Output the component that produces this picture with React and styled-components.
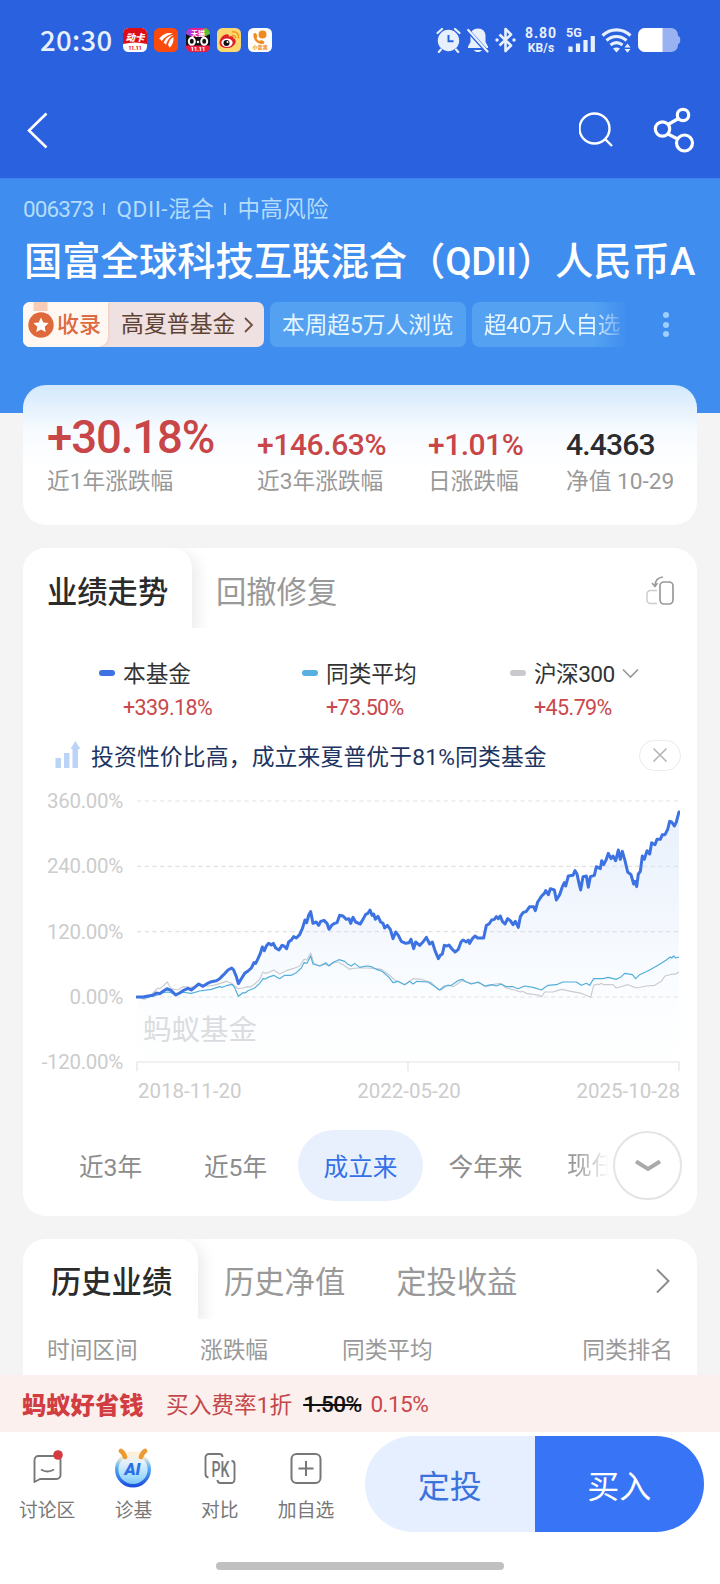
import React from 'react';
import styled, { createGlobalStyle } from 'styled-components';

const GlobalStyle = createGlobalStyle`
  * {
    box-sizing: border-box;
  }
  body {
    margin: 0;
    background: #f4f4f4;
    font-family: Roboto, 'Noto Sans CJK SC', sans-serif;
    -webkit-font-smoothing: antialiased;
  }
`;

// chart points, x 0-1626, y 0 (360%) - 783 (-120%)
const fundLine =
  '0,588 18,588 33,585 48,583 58,576 68,578 78,571 90,563 103,569 116,582 128,576 138,569 153,562 163,567 173,559 185,549 198,556 210,548 223,542 238,539 248,533 260,521 273,507 284,501 290,507 298,527 304,548 313,533 323,517 333,510 343,501 351,485 356,487 363,473 370,457 376,438 382,449 388,435 395,427 403,432 409,427 416,441 426,447 435,433 441,435 449,443 455,423 463,417 470,407 478,411 488,401 496,383 504,357 509,365 515,343 521,332 528,367 538,363 545,373 551,361 561,358 570,367 576,385 584,373 593,367 600,365 608,343 618,345 628,355 636,353 641,367 648,349 656,363 670,369 678,355 686,340 693,337 699,327 705,343 710,339 715,355 723,346 731,363 738,367 743,381 751,373 760,385 768,413 776,393 784,403 793,421 806,427 816,425 822,415 830,443 836,423 848,433 858,423 868,409 878,429 886,423 894,449 904,473 910,463 916,459 922,433 930,435 936,432 944,443 954,453 964,445 972,423 978,417 988,423 994,417 998,427 1006,413 1014,405 1022,411 1040,411 1048,373 1056,369 1064,357 1072,355 1078,347 1084,353 1090,345 1096,361 1104,369 1112,353 1120,359 1128,371 1135,361 1144,379 1150,347 1158,335 1168,331 1178,317 1190,317 1195,329 1202,303 1214,285 1222,277 1226,269 1234,281 1240,263 1252,267 1258,297 1268,281 1276,257 1282,245 1286,255 1294,225 1308,223 1314,209 1320,219 1326,247 1331,267 1338,227 1348,225 1354,259 1360,227 1372,223 1378,197 1390,203 1394,179 1400,191 1408,175 1414,157 1422,173 1428,165 1436,179 1444,147 1450,175 1456,151 1464,179 1472,213 1482,221 1490,249 1494,241 1499,257 1504,219 1510,211 1516,165 1522,175 1530,149 1538,159 1544,125 1554,131 1560,115 1570,115 1576,101 1584,101 1592,85 1598,61 1604,63 1612,75 1618,63 1626,33';
const peerLine =
  '0,588 23,591 48,585 62,582 78,575 93,573 113,579 133,573 163,577 188,570 223,565 248,557 256,559 268,554 286,550 293,560 304,586 318,575 324,576 333,569 353,561 368,547 378,533 386,534 393,529 410,523 420,529 428,533 443,523 463,523 478,515 493,501 501,485 510,487 521,465 528,489 548,495 558,491 566,485 576,495 590,483 606,476 623,481 630,488 643,495 653,487 668,499 688,495 703,497 718,505 728,508 738,513 756,529 768,545 783,541 803,551 818,541 828,549 840,541 873,543 888,553 908,567 923,555 943,553 963,539 976,535 988,543 1003,549 1023,543 1043,555 1063,551 1078,555 1093,549 1108,557 1128,557 1143,563 1163,555 1188,559 1213,567 1233,553 1258,551 1278,543 1318,543 1333,553 1348,547 1358,553 1370,533 1398,533 1413,529 1438,535 1453,527 1463,517 1486,521 1496,533 1508,521 1538,507 1563,493 1588,477 1600,468 1604,471 1610,465 1616,471 1626,468';
const indexLine =
  '0,588 23,595 36,589 48,575 63,561 68,563 76,557 91,543 96,553 103,563 123,567 138,557 163,559 188,551 213,555 230,553 240,550 268,541 283,547 293,555 304,563 318,561 333,557 340,558 353,549 368,535 378,513 384,517 393,515 410,507 428,519 448,509 468,503 488,495 501,475 510,477 521,456 530,485 548,495 556,489 566,491 576,494 583,487 603,483 618,491 638,505 644,503 663,501 688,501 718,503 733,505 753,519 773,537 803,551 815,543 829,533 853,535 883,545 903,565 913,567 933,551 948,557 976,539 988,543 1003,547 1028,545 1048,557 1068,551 1088,547 1108,561 1133,567 1150,573 1156,571 1168,577 1208,583 1213,588 1223,573 1248,573 1273,565 1303,571 1333,577 1350,584 1361,589 1370,553 1382,549 1386,551 1393,547 1400,551 1428,551 1438,561 1473,551 1498,561 1528,555 1553,553 1573,541 1584,525 1608,519 1614,520 1626,513';

const ranges = ['近3年', '近5年', '成立来', '今年来'];
const yTicks = ['360.00%', '240.00%', '120.00%', '0.00%', '-120.00%'];

const StatusIcons = () => (
  <StatusRight>
    <svg width="25" height="26" viewBox="0 0 25 26">
      <circle cx="12.5" cy="13.5" r="10.7" fill="#e8f0fd" />
      <path d="M1.5 6 6 2M23.5 6 19 2M5 22.5 2.8 25M20 22.5l2.2 2.5" stroke="#e8f0fd" strokeWidth="2.2" strokeLinecap="round" />
      <path d="M12.5 8v6.3h5" fill="none" stroke="#2a61df" strokeWidth="2" />
    </svg>
    <svg width="22" height="26" viewBox="0 0 22 26">
      <path d="M11 1.5c-4.6 0-7.5 3-7.5 7.5v6L1 19.5V21h20v-1.5L18.5 15V9c0-4.5-2.9-7.5-7.5-7.5z" fill="#e8f0fd" />
      <path d="M7 23h8c-1.5 2.7-6.5 2.7-8 0z" fill="#e8f0fd" />
      <path d="M0 2.5 20.5 25" stroke="#2a61df" strokeWidth="4" />
      <path d="M1.2 3 20.5 24.5" stroke="#e8f0fd" strokeWidth="2.2" strokeLinecap="round" />
    </svg>
    <svg width="21" height="26" viewBox="0 0 21 26">
      <path d="M4.5 7.5 16 18.500 10.500 24V2L16 7.500 4.500 18.500" fill="none" stroke="#e8f0fd" strokeWidth="2.6" strokeLinejoin="round" />
      <circle cx="2" cy="13" r="1.7" fill="#e8f0fd" />
      <circle cx="19" cy="13" r="1.7" fill="#e8f0fd" />
    </svg>
    <Speed>
      <span>8.80</span>
      <small>KB/s</small>
    </Speed>
    <Signal>
      <span>5G</span>
      <svg width="28" height="26" viewBox="0 0 28 26">
        <path d="M3.5 25v-5.500M11 25v-8.500M18.500 25V13M25.800 25V9" stroke="#e8f0fd" strokeWidth="4.2" />
      </svg>
    </Signal>
    <svg width="31" height="26" viewBox="0 0 31 26">
      <g fill="none" stroke="#e8f0fd" strokeWidth="3.1">
        <path d="M1.5 8.500C9.500 1 21.500 1 29.500 8.500" />
        <path d="M5.5 13.500c6-5.300 14-5.300 20 0" />
        <path d="M9.5 18c4-3.200 8-3.200 12 0" />
      </g>
      <path d="M12 21.500c2.300-1.500 4.700-1.500 7 0l-3.500 4z" fill="#e8f0fd" />
      <path d="M23.500 20.500 26.500 16.500 29.500 20.500zM23.500 22h6l-3 3.800z" fill="#e8f0fd" />
    </svg>
    <svg width="43" height="26" viewBox="0 0 43 26">
      <rect x="0" y="1" width="40" height="24" rx="7" fill="#98b3ef" />
      <path d="M7 1H24.500V25H7a7 7 0 0 1-7-7V8a7 7 0 0 1 7-7z" fill="#fff" />
      <path d="M40 9c3 0 3 8 0 8z" fill="#98b3ef" />
    </svg>
  </StatusRight>
);

const AppIcons = () => (
  <AppRow>
    <svg width="24" height="24" viewBox="0 0 24 24">
      <rect width="24" height="24" rx="5.5" fill="#fff" />
      <path d="M0 16V5.500A5.500 5.500 0 0 1 5.500 0h13A5.500 5.500 0 0 1 24 5.500V16q-12-3-24 0z" fill="#dd0d18" />
      <text x="12" y="12.500" fontSize="9.5" fontWeight="900" fontStyle="italic" textAnchor="middle" fill="#fff">动卡</text>
      <text x="12" y="22" fontSize="5" fontWeight="900" textAnchor="middle" fill="#dd0d18">11.11</text>
    </svg>
    <svg width="24" height="24" viewBox="0 0 24 24">
      <rect width="24" height="24" rx="5.5" fill="#fa4a0c" />
      <path d="M5 11C9 5 15 4 19 5.500 13 7 9 11 7.500 13.500 7.500 12 6.500 11 5 11z" fill="#fff" />
      <path d="M9.500 15C11 10.500 15 7.500 19.500 7 15 9.500 13 13 12 17c-.5-1.200-1.300-1.900-2.500-2z" fill="#fff" />
      <path d="M14 17.500c.5-3.500 2-7 5.500-8.500.5 4-1 8-4 11 .2-1-.4-2-1.500-2.500z" fill="#fff" />
    </svg>
    <svg width="24" height="24" viewBox="0 0 24 24">
      <rect width="24" height="24" rx="5.5" fill="#ed1c43" />
      <path d="M3 1.500Q4 .5 7 0H17q4 0 5 2l2 6H0V5z" fill="#e8209a" />
      <path d="M0 9V5Q1 1.500 4 .5L8 5l-5 5z" fill="#a13ee8" />
      <path d="M24 8V5q-1-4-5-5l-3 3 4 6z" fill="#5abf36" />
      <text x="12" y="7.500" fontSize="7" fontWeight="700" textAnchor="middle" fill="#fff">天猫</text>
      <path d="M0 6l6 3h12l6-3v11.500H0z" fill="#111" />
      <g fill="#111" stroke="#fff" strokeWidth="2">
        <ellipse cx="5.800" cy="13.300" rx="3" ry="3.500" />
        <ellipse cx="18.200" cy="13.300" rx="3" ry="3.500" />
      </g>
      <circle cx="12" cy="14" r="1.2" fill="#fff" />
      <text x="12" y="23" fontSize="5.5" fontWeight="900" textAnchor="middle" fill="#fff">11.11</text>
    </svg>
    <svg width="24" height="24" viewBox="0 0 24 24">
      <rect width="24" height="24" rx="5.5" fill="#fbd76f" />
      <path d="M2.500 15c0-5 5-9.500 8.500-8.500 1 .3 1 1.500.8 2.300 3-1 5-.5 4.700 1.700 2 .6 2.700 2 2 4C17.500 18 14 20 10 20s-7.500-2-7.500-5z" fill="#e01f26" />
      <ellipse cx="10" cy="14.800" rx="5.600" ry="4.200" fill="#fff" />
      <circle cx="9.500" cy="15" r="3" fill="#111" />
      <circle cx="10.500" cy="14" r="1" fill="#fff" />
      <path d="M15 7.500c2.500-.5 4 1 3.500 3M15 4c4.500-1 7.500 2.500 6.500 6.500" fill="none" stroke="#f3981d" strokeWidth="1.500" />
    </svg>
    <svg width="24" height="24" viewBox="0 0 24 24">
      <rect width="24" height="24" rx="5.5" fill="#fdfdfd" />
      <circle cx="14.500" cy="6.500" r="4" fill="#f08a1e" />
      <path d="M5.500 5.500 8 5l1.500 3.500L8.500 10c.5 1.500 1.700 2.500 3.200 3l1.500-1 3 1.500v2c-6 2-11.500-3-10.700-10z" fill="#f08a1e" />
      <text x="12" y="21" fontSize="5" fontWeight="700" textAnchor="middle" fill="#f08a1e">小黄滴</text>
    </svg>
  </AppRow>
);

const PerformanceChart = () => (
  <ChartBox>
    <YAxis>
      {yTicks.map((t) => (
        <span key={t}>{t}</span>
      ))}
    </YAxis>
    <Plot>
      <svg width="544" height="277" viewBox="-3 -3 1632 831">
        <defs>
          <linearGradient id="area" x1="0" y1="0" x2="0" y2="783" gradientUnits="userSpaceOnUse">
            <stop offset="0" stopColor="#3b80e8" stopOpacity="0.12" />
            <stop offset="0.5" stopColor="#3b80e8" stopOpacity="0.055" />
            <stop offset="0.75" stopColor="#3b9bf0" stopOpacity="0.02" />
            <stop offset="1" stopColor="#3b9bf0" stopOpacity="0.003" />
          </linearGradient>
        </defs>
        <polygon points={`${fundLine} 1626,783 0,783`} fill="url(#area)" />
        {[0, 196, 392, 588].map((y) => (
          <path key={y} d={`M0 ${y}H1626`} stroke="#dfe1e5" strokeWidth="3.5" strokeDasharray="13 10" />
        ))}
        <path d="M0 811V783H1626V811M813 783V811" fill="none" stroke="#e3e3e5" strokeWidth="3.5" />
        <g fill="none" strokeLinejoin="round">
          <polyline points={indexLine} stroke="#c9cbd0" strokeWidth="3.5" />
          <polyline points={peerLine} stroke="#52aedb" strokeWidth="3.5" />
          <polyline points={fundLine} stroke="#3c72e2" strokeWidth="9" strokeLinecap="round" />
        </g>
      </svg>
      <Watermark>蚂蚁基金</Watermark>
      <XAxis>
        <span>2018-11-20</span>
        <span>2022-05-20</span>
        <span>2025-10-28</span>
      </XAxis>
    </Plot>
  </ChartBox>
);

const App = () => {
  return (
    <Page>
      <GlobalStyle />
      <TopBar>
        <StatusBar>
          <StatusLeft>
            <Clock>20:30</Clock>
            <AppIcons />
          </StatusLeft>
          <StatusIcons />
        </StatusBar>
        <NavBar>
          <svg width="24" height="38" viewBox="0 0 24 38">
            <path d="M20.500 2.500 3 19.500 20.500 36.500" fill="none" stroke="#fff" strokeWidth="2.6" />
          </svg>
          <NavActions>
            <svg width="36" height="44" viewBox="0 0 36 44">
              <circle cx="15.500" cy="20.500" r="15" fill="none" stroke="#fff" strokeWidth="2.4" />
              <path d="M26 31 33 38" stroke="#fff" strokeWidth="2.4" />
            </svg>
            <svg width="42" height="46" viewBox="0 0 42 46">
              <g fill="none" stroke="#fff" strokeWidth="3.2">
                <circle cx="9.500" cy="22" r="7.200" />
                <circle cx="30" cy="8" r="5.700" />
                <circle cx="31.500" cy="36" r="8" />
                <path d="M15 17.500 25.500 11.500M15 27 24.500 32" />
              </g>
            </svg>
          </NavActions>
        </NavBar>
      </TopBar>

      <Hero>
        <Meta>
          <MetaItem $spacing="-0.9px">006373</MetaItem>
          <i />
          <MetaItem $spacing="0.6px">QDII-混合</MetaItem>
          <i />
          <MetaItem $spacing="0.4px">中高风险</MetaItem>
        </Meta>
        <FundName>
          国富全球科技互联混合（<em>QDII</em>）人民币A
        </FundName>
        <TagRow>
          <AwardTag>
            <AwardBadge>
              <svg width="27" height="45" viewBox="0 0 27 45">
                <path d="M5.500 0h14v9h-14z" fill="#f8cdb6" />
                <circle cx="13" cy="23" r="12.700" fill="#e0693b" />
                <path d="m13 15.500 2.300 4.900 5.300.7-3.900 3.700 1 5.300-4.700-2.600-4.700 2.600 1-5.300-3.900-3.700 5.300-.7z" fill="#fff" />
              </svg>
              <span>收录</span>
            </AwardBadge>
            <AwardText>
              高夏普基金
              <svg width="10" height="18" viewBox="0 0 10 18">
                <path d="m1 2 7 7-7 7" fill="none" stroke="#6d5040" strokeWidth="1.800" />
              </svg>
            </AwardText>
          </AwardTag>
          <Tag $width="196px">本周超5万人浏览</Tag>
          <Tag $width="160px" $faded>超40万人自选</Tag>
          <MoreDots>
            <i />
            <i />
            <i />
          </MoreDots>
        </TagRow>
      </Hero>

      <StatsCard>
        <Stat $width="210px">
          <StatValue $size="45.5px" $spacing="-1.1px">+30.18%</StatValue>
          <StatLabel>近1年涨跌幅</StatLabel>
        </Stat>
        <Stat $width="171px">
          <StatValue $spacing="-0.4px">+146.63%</StatValue>
          <StatLabel>近3年涨跌幅</StatLabel>
        </Stat>
        <Stat $width="138px">
          <StatValue $spacing="-0.5px">+1.01%</StatValue>
          <StatLabel>日涨跌幅</StatLabel>
        </Stat>
        <Stat>
          <StatValue $dark $spacing="-0.8px">4.4363</StatValue>
          <StatLabel>净值 10-29</StatLabel>
        </Stat>
      </StatsCard>

      <TrendCard>
        <Tabs>
          <ActiveTab $width="169px">业绩走势</ActiveTab>
          <Tab $left="24px">回撤修复</Tab>
          <TabAction $right="22px">
            <svg width="30" height="32" viewBox="0 0 30 32">
              <rect x="15" y="9" width="13" height="22" rx="4" fill="none" stroke="#999" strokeWidth="1.700" />
              <path d="M12 17.500H5.500a3.500 3.500 0 0 0-3.500 3.500v6A3.500 3.500 0 0 0 5.500 30.500h6.500" fill="none" stroke="#ccc" strokeWidth="1.500" />
              <path d="M18 4C12.500 4.500 10 8 10 13M7 10l3 3.500 2.500-3.500" fill="none" stroke="#999" strokeWidth="1.500" />
            </svg>
          </TabAction>
        </Tabs>
        <Legend>
          <LegendItem $left="76px">
            <Dash $color="#3c72e2" />
            <div>
              <LegendName>本基金</LegendName>
              <LegendValue>+339.18%</LegendValue>
            </div>
          </LegendItem>
          <LegendItem $left="279px">
            <Dash $color="#58b0e2" />
            <div>
              <LegendName>同类平均</LegendName>
              <LegendValue>+73.50%</LegendValue>
            </div>
          </LegendItem>
          <LegendItem $left="487px">
            <Dash $color="#c9cacd" />
            <div>
              <LegendName>
                <LegendIndex>沪深300</LegendIndex>
                <svg width="17" height="11" viewBox="0 0 17 11">
                  <path d="m1 1.500 7.500 7.500L16 1.500" fill="none" stroke="#999" strokeWidth="1.700" />
                </svg>
              </LegendName>
              <LegendValue>+45.79%</LegendValue>
            </div>
          </LegendItem>
        </Legend>
        <Tip>
          <svg width="26" height="28" viewBox="0 0 26 28">
            <path d="M.5 17h5.500v10H.5zM9 12h5.500v15H9zM17.500 7H23v20h-5.500z" fill="#bcd3f8" />
            <path d="M15.500 8 20.300 0l5.200 8z" fill="#bcd3f8" />
          </svg>
          <TipText>投资性价比高，成立来夏普优于81%同类基金</TipText>
          <CloseButton>
            <svg width="16" height="16" viewBox="0 0 16 16">
              <path d="m1.500 1.500 13 13M14.500 1.500l-13 13" stroke="#b5b5b5" strokeWidth="1.600" />
            </svg>
          </CloseButton>
        </Tip>
        <PerformanceChart />
        <RangeRow>
          {ranges.map((r) => (
            <Range key={r} $active={r === '成立来'}>
              {r}
            </Range>
          ))}
          <FadedRange>现任</FadedRange>
          <ExpandButton>
            <svg width="26" height="14" viewBox="0 0 26 14">
              <path d="M1 2.500 13 10 25 2.500" fill="none" stroke="#aaa" strokeWidth="4" />
            </svg>
          </ExpandButton>
        </RangeRow>
      </TrendCard>

      <HistoryCard>
        <Tabs $line="88px">
          <ActiveTab $width="175px" $pad="28px">历史业绩</ActiveTab>
          <Tab $left="26px">历史净值</Tab>
          <Tab $left="51px">定投收益</Tab>
          <TabAction $right="26px">
            <svg width="16" height="26" viewBox="0 0 16 26">
              <path d="M2 2.500 13.500 14 2 25.500" fill="none" stroke="#8c8c8c" strokeWidth="2" />
            </svg>
          </TabAction>
        </Tabs>
        <TableHead>
          <span>时间区间</span>
          <span>涨跌幅</span>
          <span>同类平均</span>
          <span>同类排名</span>
        </TableHead>
      </HistoryCard>

      <PromoBar>
        <PromoLogo>蚂蚁好省钱</PromoLogo>
        <PromoText>买入费率1折</PromoText>
        <OldRate>1.50%</OldRate>
        <NewRate>0.15%</NewRate>
      </PromoBar>

      <BottomBar>
        <Actions>
          <Action>
            <svg width="40" height="40" viewBox="0 0 40 40">
              <path d="M7.500 34V12A4 4 0 0 1 11.500 8H29.500A4 4 0 0 1 33.500 12V27A4 4 0 0 1 29.500 31H13z" fill="none" stroke="#777" strokeWidth="1.900" strokeLinejoin="round" />
              <path d="M14 21.500q6.500 4 13 0" fill="none" stroke="#777" strokeWidth="1.900" />
              <circle cx="31" cy="7" r="4.800" fill="#d43b40" />
            </svg>
            讨论区
          </Action>
          <Action>
            <svg width="40" height="40" viewBox="0 0 40 40">
              <defs>
                <linearGradient id="ball" x1="0" y1="0" x2="0" y2="1">
                  <stop offset="0" stopColor="#fdf1d8" />
                  <stop offset="0.3" stopColor="#e3f0fb" />
                  <stop offset="0.7" stopColor="#a5dcfb" />
                  <stop offset="1" stopColor="#6fc0fa" />
                </linearGradient>
                <linearGradient id="ring" x1="0" y1="0" x2="0" y2="1">
                  <stop offset="0.1" stopColor="#fdf0d6" />
                  <stop offset="0.45" stopColor="#54aef5" />
                  <stop offset="1" stopColor="#1c50e0" />
                </linearGradient>
              </defs>
              <circle cx="20" cy="21.500" r="16.300" fill="url(#ball)" stroke="url(#ring)" strokeWidth="3.400" />
              <path d="M8 3q2.500 1.500 4 6M32 3q-2.500 1.500-4 6" fill="none" stroke="#ee9a33" strokeWidth="4.600" strokeLinecap="round" />
              <text x="19.500" y="27" fontSize="17" fontWeight="900" fontStyle="italic" textAnchor="middle" fill="#2b6fe6">AI</text>
            </svg>
            诊基
          </Action>
          <Action>
            <svg width="40" height="40" viewBox="0 0 40 40">
              <path d="M8.500 29.500A3.500 3.500 0 0 1 5.500 26V9.500A3.500 3.500 0 0 1 9 6H19.500A3 3 0 0 1 22.500 9" fill="none" stroke="#777" strokeWidth="1.900" />
              <path d="M31.500 13A3 3 0 0 1 34.500 16V31.500A3.500 3.500 0 0 1 31 35H20.500A3 3 0 0 1 17.500 32" fill="none" stroke="#777" strokeWidth="1.900" />
              <text x="20.500" y="28.500" fontSize="22" fontWeight="500" textLength="18" lengthAdjust="spacingAndGlyphs" textAnchor="middle" fill="#777">PK</text>
            </svg>
            对比
          </Action>
          <Action>
            <svg width="40" height="40" viewBox="0 0 40 40">
              <rect x="5.500" y="6" width="29" height="29" rx="5" fill="none" stroke="#777" strokeWidth="2" />
              <path d="M20 13v15M12.500 20.500h15" stroke="#777" strokeWidth="2" />
            </svg>
            加自选
          </Action>
        </Actions>
        <Buttons>
          <PlanButton>定投</PlanButton>
          <BuyButton>买入</BuyButton>
        </Buttons>
        <HomeIndicator />
      </BottomBar>
    </Page>
  );
};

const Page = styled.div`
  display: flex;
  flex-direction: column;
  width: 720px;
  height: 1584px;
  overflow: hidden;
  background: #f4f4f4;
`;

const TopBar = styled.header`
  flex: none;
  height: 178px;
  background: #2a61df;
`;

const StatusBar = styled.div`
  display: flex;
  justify-content: space-between;
  align-items: center;
  height: 80px;
  padding: 0 40px;
`;

const StatusLeft = styled.div`
  display: flex;
  align-items: center;
`;

const Clock = styled.span`
  width: 83px;
  margin-top: -3px;
  color: #e8f0fd;
  font-family: 'Noto Sans CJK SC', sans-serif;
  font-size: 27.5px;
  font-weight: 500;
  line-height: 40px;
  letter-spacing: 0.3px;
`;

const AppRow = styled.div`
  display: flex;
  gap: 7.3px;
`;

const StatusRight = styled.div`
  display: flex;
  align-items: center;
  gap: 6px;
  margin-right: -1px;
`;

const Speed = styled.div`
  display: flex;
  flex-direction: column;
  align-items: center;
  width: 34px;
  margin: 0 3px 0 2px;
  color: #e8f0fd;
  font-weight: 700;
  line-height: 15px;
  font-size: 14px;
  letter-spacing: 0.9px;

  small {
    font-size: 12px;
    letter-spacing: 0.2px;
    line-height: 14px;
  }
`;

const Signal = styled.div`
  position: relative;
  height: 26px;

  span {
    position: absolute;
    left: -1px;
    top: -1px;
    color: #e8f0fd;
    font-size: 12.5px;
    font-weight: 700;
    line-height: 14px;
  }
`;

const NavBar = styled.div`
  display: flex;
  justify-content: space-between;
  align-items: center;
  height: 99px;
  padding: 1px 25px 0 26px;
`;

const NavActions = styled.div`
  display: flex;
  align-items: center;
  gap: 38px;
`;

const Hero = styled.section`
  flex: none;
  height: 235px;
  padding: 16px 23px 0;
  background: #3f8def;
  border-top: 1px solid #3c83ec;
`;

const Meta = styled.div`
  display: flex;
  align-items: center;
  height: 28px;
  color: #b4dcfc;
  font-size: 22.5px;
  line-height: 28px;

  i {
    width: 2px;
    height: 12px;
    margin: 0 11px 0 10px;
    background: #a6d2fa;
  }
`;

const MetaItem = styled.span`
  letter-spacing: ${(p) => p.$spacing};
`;

const FundName = styled.h1`
  height: 46px;
  margin: 16px 0 0 1px;
  color: #fff;
  font-size: 38.3px;
  font-weight: 500;
  line-height: 46px;
  white-space: nowrap;

  em {
    font-style: normal;
    letter-spacing: -0.4px;
  }
`;

const TagRow = styled.div`
  display: flex;
  gap: 6px;
  margin-top: 17px;
`;

const AwardTag = styled.div`
  display: flex;
  width: 241px;
  height: 45px;
  border-radius: 7px;
  background: #efe1e1;
  overflow: hidden;
`;

const AwardBadge = styled.div`
  display: flex;
  align-items: center;
  gap: 2px;
  width: 85px;
  padding-left: 5px;
  background: #fff8f2;
  border-bottom-right-radius: 10px;
  box-shadow: 1px 1px 2px #f0cfc2;
  color: #dd6a40;
  font-size: 22px;
  font-weight: 500;
  line-height: 45px;
  white-space: nowrap;

  span {
    height: 45px;
  }
`;

const AwardText = styled.div`
  display: flex;
  align-items: center;
  gap: 9px;
  padding-left: 13px;
  color: #5e4334;
  font-size: 22.9px;
  line-height: 46px;
  white-space: nowrap;
`;

const Tag = styled.div`
  width: ${(p) => p.$width};
  height: 45px;
  padding-left: 12px;
  border-radius: 7px;
  background: #54a1f1;
  color: #e6f6ff;
  font-size: 22.7px;
  line-height: 47px;
  white-space: nowrap;
  overflow: hidden;
  ${(p) =>
    p.$faded &&
    `
    letter-spacing: -0.4px;
    mask-image: linear-gradient(to right, #000 76%, transparent 98%);
  `}
`;

const MoreDots = styled.div`
  display: flex;
  flex-direction: column;
  justify-content: center;
  gap: 3.5px;
  margin-left: 25px;

  i {
    width: 6px;
    height: 6px;
    border-radius: 50%;
    background: #9ed0fb;
  }
`;

const Card = styled.section`
  flex: none;
  width: 674px;
  margin: 0 auto;
  border-radius: 23px;
  background: #fff;
`;

const StatsCard = styled(Card)`
  position: relative;
  display: flex;
  height: 140px;
  margin-top: -28px;
  padding: 28px 0 0 24px;
  background: linear-gradient(to bottom, #d2e8fd 0, #f7fbff 32%, #fff 60%);
`;

const Stat = styled.div`
  width: ${(p) => p.$width || 'auto'};
  white-space: nowrap;
`;

const StatValue = styled.div`
  display: flex;
  align-items: flex-end;
  height: 52px;
  color: ${(p) => (p.$dark ? '#2b2c30' : '#c84548')};
  font-size: ${(p) => p.$size || '30px'};
  font-weight: 500;
  line-height: ${(p) => (p.$size ? '55px' : '41px')};
  letter-spacing: ${(p) => p.$spacing};
`;

const StatLabel = styled.div`
  height: 32px;
  color: #999;
  font-size: 22.7px;
  line-height: 33px;
`;

const TrendCard = styled(Card)`
  height: 668px;
  margin-top: 23px;
`;

const Tabs = styled.div`
  display: flex;
  height: 82px;
  line-height: ${(p) => p.$line || '90px'};
  font-size: 30.3px;
  overflow: hidden;
  border-radius: 23px 23px 0 0;
`;

const ActiveTab = styled.div`
  width: ${(p) => p.$width};
  padding-left: ${(p) => p.$pad || '24px'};
  border-radius: 20px 20px 0 0;
  background: #fff;
  box-shadow: 7px 4px 14px rgba(0, 0, 0, 0.07);
  clip-path: inset(0 -24px 2px 0);
  color: #2b2b2b;
  font-weight: 500;
`;

const Tab = styled.div`
  margin-left: ${(p) => p.$left};
  color: #999;
`;

const TabAction = styled.div`
  display: flex;
  align-items: center;
  margin-left: auto;
  padding-right: ${(p) => p.$right};
`;

const Legend = styled.div`
  display: grid;
  height: 82px;
  padding-top: 27px;
`;

const LegendItem = styled.div`
  display: flex;
  grid-area: 1 / 1;
  gap: 8px;
  width: max-content;
  margin-left: ${(p) => p.$left};
`;

const Dash = styled.i`
  width: 16px;
  height: 6px;
  margin-top: 13px;
  border-radius: 3px;
  background: ${(p) => p.$color};
`;

const LegendName = styled.div`
  display: flex;
  align-items: center;
  gap: 7px;
  height: 34px;
  padding-top: 2px;
  color: #333;
  font-size: 22.7px;
  line-height: 32px;

  svg {
    margin-top: -3px;
  }
`;

const LegendIndex = styled.span`
  letter-spacing: -0.6px;
`;

const LegendValue = styled.div`
  height: 34px;
  color: #c9484c;
  font-size: 21.5px;
  line-height: 34px;
  letter-spacing: -0.6px;
`;

const Tip = styled.div`
  display: flex;
  align-items: center;
  height: 40px;
  margin-top: 23px;
  padding: 0 16px 0 32px;
`;

const TipText = styled.div`
  flex: 1;
  margin-left: 10px;
  color: #1c3461;
  font-size: 22.8px;
  letter-spacing: 0.15px;
  white-space: nowrap;
`;

const CloseButton = styled.div`
  display: flex;
  align-items: center;
  justify-content: center;
  width: 42px;
  height: 31px;
  border: 1px solid #ebebe8;
  border-radius: 16px;
`;

const ChartBox = styled.div`
  display: flex;
  height: 326px;
  padding: 12px 0 0 16px;
`;

const YAxis = styled.div`
  display: flex;
  flex-direction: column;
  justify-content: space-between;
  width: 84px;
  height: 289px;
  text-align: right;
  color: #ccc;
  font-size: 20.5px;
  line-height: 28px;
  letter-spacing: -0.3px;
`;

const Plot = styled.div`
  position: relative;
  margin-left: 13px;
  padding-top: 13px;

  svg {
    display: block;
  }
`;

const Watermark = styled.div`
  position: absolute;
  left: 7px;
  top: 226px;
  color: #dadce0;
  font-size: 28.5px;
  line-height: 36px;
`;

const XAxis = styled.div`
  display: flex;
  justify-content: space-between;
  width: 544px;
  padding-left: 2px;
  color: #ccc;
  font-size: 20.5px;
  line-height: 28px;
`;

const RangeRow = styled.div`
  display: flex;
  align-items: center;
  height: 71px;
  margin-top: 29px;
  padding-left: 25px;
`;

const Range = styled.div`
  width: 125px;
  height: 71px;
  border-radius: 36px;
  background: ${(p) => (p.$active ? '#e8f0fe' : 'transparent')};
  color: ${(p) => (p.$active ? '#3470e6' : '#8c8c8c')};
  font-size: 24.7px;
  line-height: 75px;
  text-align: center;
`;

const FadedRange = styled.div`
  width: 44px;
  margin-left: 19px;
  color: #999;
  font-size: 24.7px;
  line-height: 75px;
  white-space: nowrap;
  overflow: hidden;
  mask-image: linear-gradient(to right, #000 20%, transparent 95%);
`;

const ExpandButton = styled.div`
  display: flex;
  align-items: center;
  justify-content: center;
  flex: none;
  width: 69px;
  height: 69px;
  margin-left: 2px;
  border: 2px solid #e4e4e4;
  border-radius: 50%;
`;

const HistoryCard = styled(Card)`
  height: 136px;
  margin-top: 23px;
  border-radius: 23px 23px 0 0;
`;

const TableHead = styled.div`
  display: grid;
  grid-template-columns: 153px 142px 1fr auto;
  padding: 14px 24px 0 24px;
  color: #999;
  font-size: 22.7px;
  line-height: 32px;
`;

const PromoBar = styled.div`
  flex: none;
  display: flex;
  align-items: center;
  height: 57px;
  padding: 0 22px;
  background: #fcf0ee;
  font-size: 22.7px;
`;

const PromoLogo = styled.span`
  width: 144px;
  color: #d13d40;
  font-size: 24.3px;
  font-weight: 900;
  white-space: nowrap;
`;

const PromoText = styled.span`
  color: #c4474a;
`;

const OldRate = styled.span`
  margin: 2px 0 0 11px;
  color: #111;
  font-weight: 500;
  letter-spacing: -0.7px;
  text-decoration: line-through;
`;

const NewRate = styled.span`
  margin: 2px 0 0 9px;
  color: #c9484c;
  letter-spacing: -0.6px;
`;

const BottomBar = styled.footer`
  display: grid;
  grid-template-columns: 361px 339px;
  grid-template-rows: 130px 8px;
  flex: none;
  height: 152px;
  padding: 0 4px;
  background: #fff;
`;

const Actions = styled.div`
  display: grid;
  grid-template-columns: repeat(4, 86.3px);
`;

const Action = styled.div`
  display: flex;
  flex-direction: column;
  align-items: center;
  gap: 6.5px;
  padding-top: 16px;
  color: #777;
  font-size: 18.8px;
  line-height: 32px;
`;

const Buttons = styled.div`
  display: flex;
  height: 96px;
  margin-top: 4px;
  border-radius: 48px;
  overflow: hidden;
  font-size: 32px;
  line-height: 102px;
  text-align: center;
`;

const PlanButton = styled.div`
  flex: 1;
  background: #e5efff;
  color: #3b73dd;
`;

const BuyButton = styled.div`
  flex: 1;
  background: #3874f6;
  color: #fff;
`;

const HomeIndicator = styled.div`
  grid-column: 1 / 3;
  width: 288px;
  height: 8px;
  margin-left: 212px;
  border-radius: 4px;
  background: #c0c0c0;
`;

export default App;
